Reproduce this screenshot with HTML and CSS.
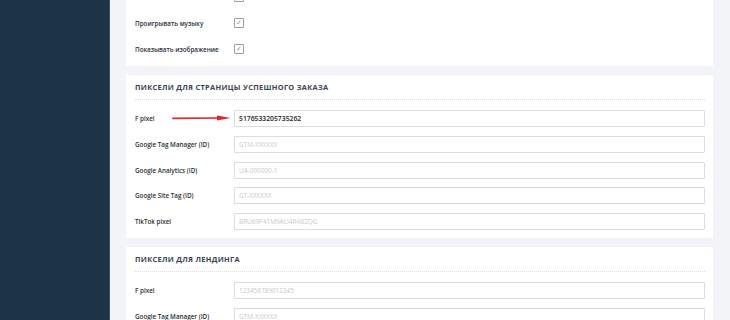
FILE: index.html
```html
<!DOCTYPE html>
<html lang="ru">
<head>
<meta charset="utf-8">
<link rel="stylesheet" href="styles.css">
</head>
<body>
<div class="layout">
  <aside class="sidebar"></aside>
  <main class="main">
    <section class="card card-top">
      <div class="check-row"><span class="label"></span><span class="checkbox">✓</span></div>
      <div class="check-row"><span class="label">Проигрывать музыку</span><span class="checkbox">✓</span></div>
      <div class="check-row"><span class="label">Показывать изображение</span><span class="checkbox">✓</span></div>
    </section>

    <section class="card">
      <h2 class="card-title">Пиксели для страницы успешного заказа</h2>
      <div class="fields">
        <div class="field-row">
          <label class="label">F pixel</label>
          <input class="input filled" value="5176533205735262">
          <svg class="arrow" width="60" height="8" viewBox="0 0 60 8">
            <path d="M1 4.4 L47 4" stroke="#e0262b" stroke-width="1.7" stroke-linecap="round"/>
            <path d="M45 1.4 L58.5 4 L45 6.6 Z" fill="#e0262b"/>
          </svg>
        </div>
        <div class="field-row"><label class="label">Google Tag Manager (ID)</label><input class="input" placeholder="GTM-XXXXXX"></div>
        <div class="field-row"><label class="label">Google Analytics (ID)</label><input class="input" placeholder="UA-000000-1"></div>
        <div class="field-row"><label class="label">Google Site Tag (ID)</label><input class="input" placeholder="GT-XXXXXX"></div>
        <div class="field-row"><label class="label">TikTok pixel</label><input class="input" placeholder="BRU69P41M9ALI4R4B2QG"></div>
      </div>
    </section>

    <section class="card">
      <h2 class="card-title">Пиксели для лендинга</h2>
      <div class="fields">
        <div class="field-row"><label class="label">F pixel</label><input class="input" placeholder="123456789012345"></div>
        <div class="field-row"><label class="label">Google Tag Manager (ID)</label><input class="input" placeholder="GTM-XXXXXX"></div>
      </div>
    </section>
  </main>
</div>
</body>
</html>
```

FILE: styles.css
```css
* { box-sizing: border-box; }
html, body { margin: 0; padding: 0; height: 100%; overflow: hidden; }
body {
  font-family: "Open Sans", "Noto Sans", sans-serif;
  background: #f3f4f8;
}
.layout { display: flex; height: 320px; }
.sidebar {
  width: 110px;
  flex: none;
  background: #1d3347;
  border-right: 1px solid #3b5064;
}
.main {
  flex: 1;
  padding: 0 17px 0 16px;
}
.card {
  background: #fff;
  padding: 0 8px 8px 9px;
  margin-bottom: 9px;
}
.card-top {
  margin-top: -30px;
  padding-top: 14px;
  padding-bottom: 4px;
}
.check-row {
  display: flex;
  align-items: center;
  height: 26px;
}
.label {
  width: 99px;
  flex: none;
  font-size: 6.3px;
  font-weight: 600;
  color: #2a3039;
}
.checkbox {
  width: 10px;
  height: 10px;
  border: 1px solid #9a9da2;
  border-radius: 1px;
  font-size: 7px;
  line-height: 8px;
  text-align: center;
  color: #8a8d92;
}
.card-title {
  margin: 0 0 10px;
  height: 25px;
  line-height: 25px;
  font-size: 7.4px;
  font-weight: 700;
  letter-spacing: 0.3px;
  text-transform: uppercase;
  color: #3c4450;
  border-bottom: 1px dotted #d7d9e2;
}
.fields {
  display: flex;
  flex-direction: column;
  gap: 8.75px;
}
.field-row {
  position: relative;
  display: flex;
  align-items: center;
  height: 17px;
}
.input {
  flex: 1;
  height: 17px;
  border: 1px solid #dcdde2;
  border-radius: 1px;
  padding: 0 4px;
  font-family: "Open Sans", "Noto Sans", sans-serif;
  font-size: 6.4px;
  color: #222;
  background: #fff;
  outline: none;
}
.input::placeholder { color: #c6c9ce; }
.input.filled { font-weight: 600; font-size: 6.8px; color: #222; }
.arrow {
  position: absolute;
  left: 37px;
  top: 4px;
}
```
